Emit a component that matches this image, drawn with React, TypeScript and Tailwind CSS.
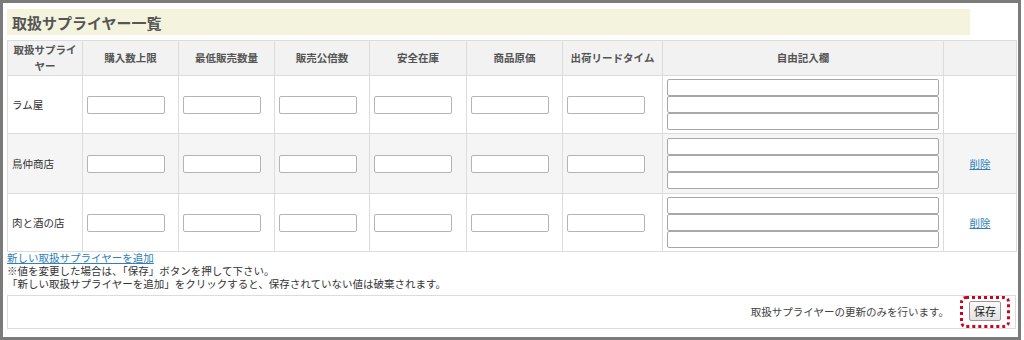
import React from "react";

const font = { fontFamily: '"Noto Sans CJK JP", "Noto Sans", sans-serif' };

const headers = ["購入数上限", "最低販売数量", "販売公倍数", "安全在庫", "商品原価", "出荷リードタイム"];

const rows = [
  { name: "ラム屋", bg: "bg-white", del: false },
  { name: "鳥仲商店", bg: "bg-[#f5f5f5]", del: true },
  { name: "肉と酒の店", bg: "bg-white", del: true },
];

function Input() {
  return <div className="w-[78px] h-[18px] bg-white border border-[#b4b4b4] rounded-[2px]" />;
}

export default function App() {
  return (
    <div className="w-[1024px] h-[340px] bg-white" style={font}>
      <div className="w-[1021px] h-[340px] border-[3px] border-[#7b7b7b] pt-[6px] pl-[4px] text-[#333]">
        <div className="w-[963px] h-[26px] bg-[#f4f4de] pl-[5px] flex items-center text-[15px] font-bold text-[#555] leading-none">
          取扱サプライヤー一覧
        </div>
        <table className="mt-[5px] w-[1009px] table-fixed border-collapse text-[10.5px]">
          <colgroup>
            <col className="w-[75px]" />
            <col className="w-[96px]" />
            <col className="w-[96px]" />
            <col className="w-[95px]" />
            <col className="w-[97px]" />
            <col className="w-[96px]" />
            <col className="w-[100px]" />
            <col className="w-[281px]" />
            <col className="w-[73px]" />
          </colgroup>
          <thead>
            <tr className="h-[35px] bg-[#f2f2f2]">
              <th className="border border-[#dcdcdc] font-bold text-[#555] leading-[16px] px-[3px]">取扱サプライヤー</th>
              {headers.map((h) => (
                <th key={h} className="border border-[#dcdcdc] font-bold text-[#555]">{h}</th>
              ))}
              <th className="border border-[#dcdcdc] font-bold text-[#555]">自由記入欄</th>
              <th className="border border-[#dcdcdc]"></th>
            </tr>
          </thead>
          <tbody>
            {rows.map((r, i) => (
              <tr key={r.name} className={`${r.bg} ${i === 1 ? "h-[60px]" : "h-[58px]"}`}>
                <td className="border border-[#dcdcdc] pl-[4px] text-[#333]">{r.name}</td>
                {headers.map((h) => (
                  <td key={h} className="border border-[#dcdcdc] pl-[4px]">
                    <Input />
                  </td>
                ))}
                <td className="border border-[#dcdcdc] pl-[4px]">
                  <div className="flex flex-col w-[272px]">
                    <div className="h-[17px] bg-white border border-[#a8a8a8] rounded-[2px]" />
                    <div className="h-[17px] bg-white border border-[#a8a8a8] rounded-[2px]" />
                    <div className="h-[17px] bg-white border border-[#a8a8a8] rounded-[2px]" />
                  </div>
                </td>
                <td className="border border-[#dcdcdc] text-center">
                  {r.del && <a className="text-[#2f7fb8] underline">削除</a>}
                </td>
              </tr>
            ))}
          </tbody>
        </table>
        <div className="text-[10.5px] leading-[13px] -mt-[1px]">
          <div>
            <a className="text-[#2f7fb8] underline">新しい取扱サプライヤーを追加</a>
          </div>
          <div>※値を変更した場合は、「保存」ボタンを押して下さい。</div>
          <div>「新しい取扱サプライヤーを追加」をクリックすると、保存されていない値は破棄されます。</div>
        </div>
        <div className="mt-[5px] w-[1009px] h-[34px] border border-[#dcdcdc] flex items-center justify-end pr-[5px]">
          <span className="text-[10.5px] text-[#444] mr-[11px]">取扱サプライヤーの更新のみを行います。</span>
          <div className="border-[3px] border-dotted border-[#d0021b] rounded-[6px] px-[6px] pt-[2px] pb-[4px]">
            <button className="w-[32px] h-[20px] border border-[#999] rounded-[2px] bg-gradient-to-b from-[#fafafa] to-[#e2e2e2] text-[11px] text-[#222] leading-none flex items-center justify-center">
              保存
            </button>
          </div>
        </div>
      </div>
    </div>
  );
}
